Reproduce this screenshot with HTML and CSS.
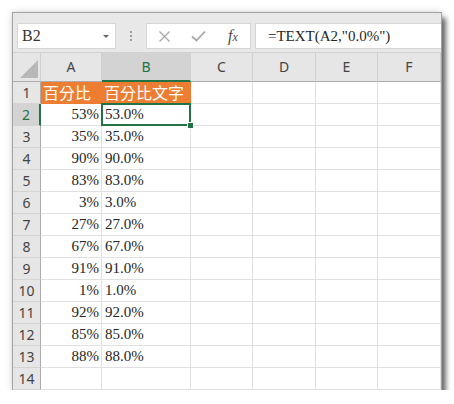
FILE: index.html
```html
<!DOCTYPE html>
<html lang="en">

<head>
    <meta charset="UTF-8">
    <meta name="viewport" content="width=device-width, initial-scale=1.0">
    <title>TEXT</title>
    <link rel="stylesheet" href="styles.css">
</head>

<body>
    <div class="window">
        <div class="formula-bar">
            <div class="name-box">
                <span>B2</span>
                <span class="caret"></span>
            </div>
            <div class="grip"><i></i><i></i><i></i></div>
            <div class="fx-buttons">
                <div class="fx-btn">
                    <svg width="13" height="13" viewBox="0 0 13 13">
                        <path d="M1.5 1.5 L11.5 11.5 M11.5 1.5 L1.5 11.5" stroke="#a8a8a8" stroke-width="1.3" fill="none" />
                    </svg>
                </div>
                <div class="fx-btn">
                    <svg width="15" height="12" viewBox="0 0 15 12">
                        <path d="M1 6.5 L5.5 10.5 L14 1.5" stroke="#a8a8a8" stroke-width="1.8" fill="none" />
                    </svg>
                </div>
                <div class="fx-btn fx"><i>f</i><i class="x">x</i></div>
            </div>
            <div class="formula">=TEXT(A2,"0.0%")</div>
        </div>

        <div class="sheet">
            <div class="corner"><span class="tri"></span></div>
            <div class="ch">A</div>
            <div class="ch sel">B</div>
            <div class="ch">C</div>
            <div class="ch">D</div>
            <div class="ch">E</div>
            <div class="ch">F</div>

            <div class="rh">1</div>
            <div class="c title" lang="zh-Hant">百分比</div>
            <div class="c title" lang="zh-Hant">百分比文字</div>
            <div class="c"></div><div class="c"></div><div class="c"></div><div class="c"></div>

            <div class="rh sel">2</div>
            <div class="c num">53%</div>
            <div class="c active">53.0%<span class="handle"></span></div>
            <div class="c"></div><div class="c"></div><div class="c"></div><div class="c"></div>

            <div class="rh">3</div>
            <div class="c num">35%</div>
            <div class="c">35.0%</div>
            <div class="c"></div><div class="c"></div><div class="c"></div><div class="c"></div>

            <div class="rh">4</div>
            <div class="c num">90%</div>
            <div class="c">90.0%</div>
            <div class="c"></div><div class="c"></div><div class="c"></div><div class="c"></div>

            <div class="rh">5</div>
            <div class="c num">83%</div>
            <div class="c">83.0%</div>
            <div class="c"></div><div class="c"></div><div class="c"></div><div class="c"></div>

            <div class="rh">6</div>
            <div class="c num">3%</div>
            <div class="c">3.0%</div>
            <div class="c"></div><div class="c"></div><div class="c"></div><div class="c"></div>

            <div class="rh">7</div>
            <div class="c num">27%</div>
            <div class="c">27.0%</div>
            <div class="c"></div><div class="c"></div><div class="c"></div><div class="c"></div>

            <div class="rh">8</div>
            <div class="c num">67%</div>
            <div class="c">67.0%</div>
            <div class="c"></div><div class="c"></div><div class="c"></div><div class="c"></div>

            <div class="rh">9</div>
            <div class="c num">91%</div>
            <div class="c">91.0%</div>
            <div class="c"></div><div class="c"></div><div class="c"></div><div class="c"></div>

            <div class="rh">10</div>
            <div class="c num">1%</div>
            <div class="c">1.0%</div>
            <div class="c"></div><div class="c"></div><div class="c"></div><div class="c"></div>

            <div class="rh">11</div>
            <div class="c num">92%</div>
            <div class="c">92.0%</div>
            <div class="c"></div><div class="c"></div><div class="c"></div><div class="c"></div>

            <div class="rh">12</div>
            <div class="c num">85%</div>
            <div class="c">85.0%</div>
            <div class="c"></div><div class="c"></div><div class="c"></div><div class="c"></div>

            <div class="rh">13</div>
            <div class="c num">88%</div>
            <div class="c">88.0%</div>
            <div class="c"></div><div class="c"></div><div class="c"></div><div class="c"></div>

            <div class="rh">14</div>
            <div class="c"></div>
            <div class="c"></div>
            <div class="c"></div><div class="c"></div><div class="c"></div><div class="c"></div>
        </div>
    </div>
</body>

</html>
```

FILE: styles.css
```css
body {
    margin: 0;
    background-color: #fff;
    font-family: "Liberation Serif", "Times New Roman", serif;
}

.window {
    margin: 13px 0 0 13px;
    width: 428px;
    height: 377px;
    background-color: #fff;
    box-shadow: 0 0 0 1px #a3a3a3, 5px 5px 5px rgba(0, 0, 0, 0.55), 0 0 7px rgba(0, 0, 0, 0.25);
    overflow: hidden;
}

/* formula bar */
.formula-bar {
    height: 39px;
    box-sizing: border-box;
    padding-top: 10px;
    background-color: #e8e8e8;
    display: flex;
    align-items: flex-start;
}

.name-box,
.fx-buttons,
.formula {
    height: 26px;
    box-sizing: border-box;
    background-color: #fff;
    border: 1px solid #d6d6d6;
}

.name-box {
    margin-left: 4px;
    width: 99px;
    padding: 0 6px 0 4px;
    display: flex;
    align-items: center;
    justify-content: space-between;
    font-family: "Liberation Serif", serif;
    font-size: 16px;
    color: #333;
}

.caret {
    width: 0;
    height: 0;
    border-left: 3px solid transparent;
    border-right: 3px solid transparent;
    border-top: 3px solid #666;
}

.grip {
    width: 30px;
    height: 26px;
    display: flex;
    flex-direction: column;
    align-items: center;
    justify-content: center;
    gap: 2px;
}

.grip i {
    width: 2px;
    height: 2px;
    background-color: #9c9c9c;
}

.fx-buttons {
    width: 105px;
    display: flex;
}

.fx-btn {
    width: 35px;
    display: flex;
    align-items: center;
    justify-content: center;
}

.fx {
    font-family: "Liberation Serif", serif;
    font-size: 16px;
    color: #4a4a4a;
}

.fx .x {
    font-size: 12px;
    margin-top: 3px;
}

.formula {
    flex: 1;
    margin-left: 4px;
    border-right: none;
    padding-left: 12px;
    font-family: "Liberation Serif", serif;
    font-size: 15px;
    line-height: 24px;
    color: #262626;
}

/* grid */
.sheet {
    display: grid;
    grid-template-columns: 28px 61px 89px 62px 63px 62px 63px;
    grid-template-rows: 30px repeat(14, 22px);
}

.sheet > div {
    box-sizing: border-box;
}

.corner,
.ch {
    background-color: #e6e6e6;
    border-top: 1px solid #d2d2d2;
    border-right: 1px solid #d0d0d0;
    border-bottom: 1px solid #ababab;
}

.corner {
    position: relative;
}

.tri {
    position: absolute;
    right: 2px;
    bottom: 3px;
    width: 18px;
    height: 18px;
    background-color: #b8b8b8;
    clip-path: polygon(100% 0, 100% 100%, 0 100%);
}

.ch,
.rh {
    font-family: "Noto Sans", sans-serif;
    font-size: 14px;
    color: #444;
    text-align: center;
}

.ch {
    line-height: 28px;
}

.rh {
    background-color: #e6e6e6;
    border-right: 1px solid #ababab;
    border-bottom: 1px solid #d4d4d4;
    line-height: 21px;
}

.ch.sel {
    background-color: #d3d3d3;
    color: #217346;
    border-bottom: 2px solid #217346;
}

.rh.sel {
    background-color: #d3d3d3;
    color: #217346;
    border-right: 2px solid #217346;
}

.c {
    border-right: 1px solid #e1e1e1;
    border-bottom: 1px solid #e1e1e1;
    font-family: "Liberation Serif", serif;
    font-size: 15px;
    line-height: 21px;
    color: #262626;
    padding: 0 3px;
    white-space: nowrap;
}

.c.num {
    text-align: right;
    padding-right: 2px;
}

.c.title {
    background-color: #ed7d31;
    border-color: #ed7d31;
    color: #fff;
    font-family: "Noto Sans CJK TC", sans-serif;
    font-size: 16px;
    line-height: 20px;
    padding-left: 2px;
}

.c.active {
    position: relative;
}

.c.active::after {
    content: "";
    position: absolute;
    left: -1px;
    top: -1px;
    right: -1px;
    bottom: -1px;
    border: 2px solid #217346;
}

.handle {
    position: absolute;
    right: -4px;
    bottom: -4px;
    width: 5px;
    height: 5px;
    background-color: #217346;
    border: 1px solid #fff;
    z-index: 1;
}
```
